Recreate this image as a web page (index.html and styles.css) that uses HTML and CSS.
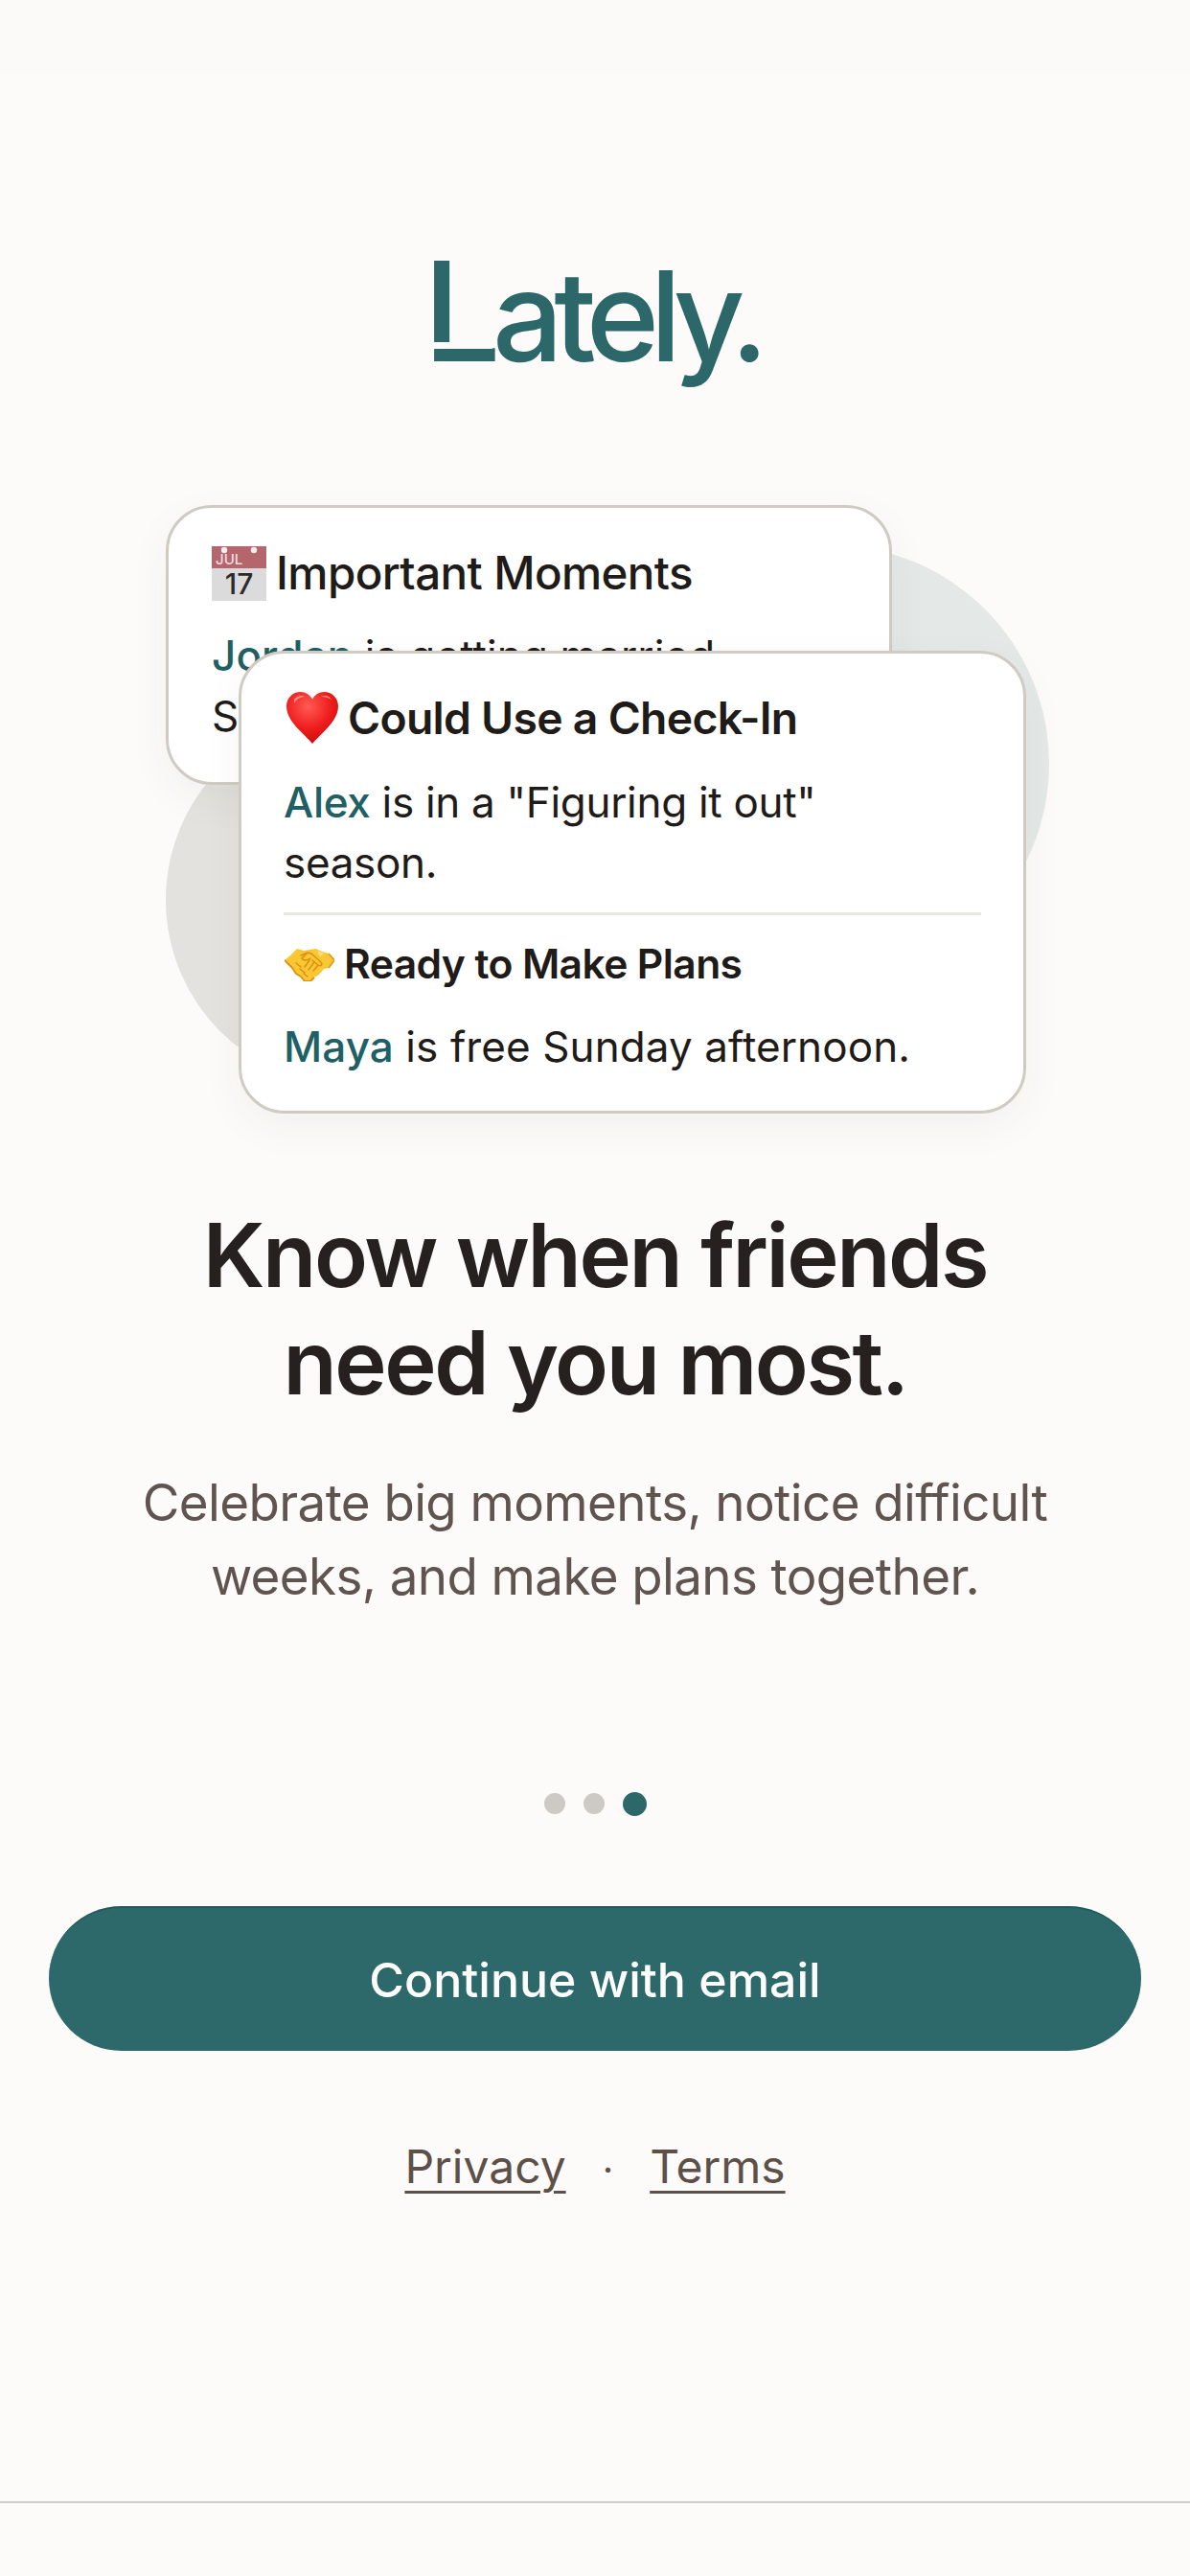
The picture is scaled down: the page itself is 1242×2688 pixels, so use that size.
FILE: index.html
```html
<!DOCTYPE html>
<html lang="en">
<head>
<meta charset="utf-8">
<title>Lately</title>
<link rel="stylesheet" href="styles.css">
</head>
<body>
<main class="screen">
  <div class="status-band"></div>
  <div class="logo"><span class="logo-l">L</span>ately.</div>
  <section class="art">
    <div class="blob blob-right"></div>
    <div class="blob blob-left"></div>
    <article class="card card-back">
      <div class="card-head">
        <svg class="emoji-cal" viewBox="0 0 57 57" aria-hidden="true">
          <rect width="57" height="57" fill="#dcdbdb"/>
          <rect width="57" height="23" fill="#b5666c"/>
          <circle cx="13" cy="4" r="3.2" fill="#f6eeee"/>
          <circle cx="44" cy="4" r="3.2" fill="#f6eeee"/>
          <text class="cal-month" x="4" y="19">JUL</text>
          <text class="cal-day" x="28.5" y="50">17</text>
        </svg>
        <h2 class="head-back">Important Moments</h2>
      </div>
      <p class="line line-wide"><b class="name">Jordan</b> is getting married Saturday.</p>
    </article>
    <article class="card card-front">
      <div class="card-head head-row-a">
        <svg class="emoji-heart" viewBox="0 0 54 54" aria-hidden="true">
          <defs>
            <radialGradient id="hg" cx="0.42" cy="0.28" r="0.8">
              <stop offset="0" stop-color="#ff5c54"/>
              <stop offset="0.55" stop-color="#ee1c1c"/>
              <stop offset="1" stop-color="#c40808"/>
            </radialGradient>
          </defs>
          <path d="M27 54 C19 44 0 31 0 15 C0 6 7 0 14.500 0 C20 0 24.500 3 27 7.500 C29.500 3 34 0 39.500 0 C47 0 54 6 54 15 C54 31 35 44 27 54 Z" fill="url(#hg)"/>
          <path d="M8 8 C11 4 16 3 19 5 C14 5 10 8 8 12 Z" fill="#ffb3ad" opacity=".75"/>
          <path d="M36 5 C40 3 45 4 47 8 C44 6 40 5 36 5 Z" fill="#ffb3ad" opacity=".7"/>
        </svg>
        <h2 class="head-front">Could Use a Check-In</h2>
      </div>
      <p class="line"><b class="name">Alex</b> is in a "Figuring it out" season.</p>
      <hr class="rule">
      <div class="card-head head-row-b">
        <svg class="emoji-shake" viewBox="0 0 52 35" aria-hidden="true">
          <path d="M0 13 L6 8 L13 1 L20 3 L26 2 L33 1 L39 4 L46 6 L52 13 L46 21 L41 22 L36 28 L31 31 L27 35 L21 35 L17 30 L12 27 L8 21 Z" fill="#f9c733"/>
          <path d="M0 13 L8 21 L12 27 L17 30 L21 35 L27 35 L31 31" fill="none" stroke="#dc8f14" stroke-width="1.800" stroke-linejoin="round"/>
          <path d="M46 6 L52 13 L46 21" fill="none" stroke="#e59d1e" stroke-width="1.800" stroke-linejoin="round"/>
          <path d="M17 8 L24 5 L28 6 L38 15 C40 17 38 20 35 18 L29 13 M24 5 L18 11 C20 14 24 13 27 11 M35 18 L30 24 M31 15 L25 23 M26 13 L21 20 M12 16 L17 20 M16 22 L21 26 M20 27 L24 30" fill="none" stroke="#dc8f14" stroke-width="1.500" stroke-linecap="round" stroke-linejoin="round"/>
          <path d="M34 3 L41 6 L37 9 Z" fill="#fde07a"/>
        </svg>
        <h3 class="head-small">Ready to Make Plans</h3>
      </div>
      <p class="line line-wide"><b class="name">Maya</b> is free Sunday afternoon.</p>
    </article>
  </section>
  <h1 class="title">Know when friends<br>need you most.</h1>
  <p class="sub">Celebrate big moments, notice difficult<br>weeks, and make plans together.</p>
  <div class="dots">
    <span class="dot"></span>
    <span class="dot"></span>
    <span class="dot dot-on"></span>
  </div>
  <button class="cta">Continue with email</button>
  <nav class="legal">
    <a class="legal-link">Privacy</a>
    <span class="legal-sep">·</span>
    <a class="legal-link">Terms</a>
  </nav>
  <div class="home-band"></div>
</main>
</body>
</html>
```
FILE: styles.css
```css
* { box-sizing: border-box; }
html, body { margin: 0; padding: 0; }
body { background: #fcfbf9; font-family: Inter, "Liberation Sans", sans-serif; color: #1f1b18; }
.screen { width: 1242px; height: 2688px; display: flex; flex-direction: column; align-items: center; overflow: hidden; background: #fcfbf9; }
.status-band { width: 100%; height: 76px; background: #fbfaf8; flex: none; }

.logo { margin-top: 174px; margin-right: 8px; height: 150px; line-height: 150px; font-size: 130px; font-weight: 550; letter-spacing: -9.5px; color: #2c686a; flex: none; }
.logo-l { position: relative; display: inline-block; font-size: 144px; letter-spacing: -9px; }
.logo-l::after { content: ""; position: absolute; left: 0; right: 0; bottom: 36px; height: 7px; background: #fcfbf9; }

.art { position: relative; width: 100%; height: 680px; margin-top: 110px; flex: none; }
.blob { position: absolute; border-radius: 50%; }
.blob-right { left: 639px; top: 59px; width: 456px; height: 456px; background: #e4e9e8; }
.blob-left { left: 173px; top: 235px; width: 388px; height: 388px; background: #e3e2de; }

.card { position: absolute; background: #fff; border: 3px solid #cfcbc2; border-radius: 48px; box-shadow: 0 14px 44px rgba(60, 50, 40, 0.05); }
.card-back { left: 173px; top: 17px; width: 758px; height: 292px; padding: 37px 45px; }
.card-front { left: 249px; top: 169px; width: 822px; height: 483px; padding: 36px 44px; }
.card-head { display: flex; align-items: center; gap: 10px; }
.card-head h2, .card-head h3 { margin: 0; }
.emoji-cal { width: 57px; height: 57px; flex: none; }
.emoji-heart { width: 54px; height: 54px; flex: none; margin-left: 3px; }
.emoji-shake { width: 52px; height: 35px; flex: none; margin-left: 1px; }
.cal-month { font: 500 15px Inter, sans-serif; fill: #f3dfe0; }
.cal-day { font: 500 30px Inter, sans-serif; fill: #2b2b2b; text-anchor: middle; }
.head-back { font-size: 47.5px; font-weight: 500; line-height: 62px; letter-spacing: -0.6px; }
.head-front { font-size: 46.3px; font-weight: 580; line-height: 62px; letter-spacing: -0.7px; }
.head-small { font-size: 42.6px; font-weight: 580; line-height: 62px; letter-spacing: -0.6px; margin-left: 4px; }
.line { margin: 26px 0 0; font-size: 44px; line-height: 63px; font-weight: 400; letter-spacing: -0.3px; }
.line-wide { letter-spacing: 0.1px; }
.card-back .line { margin-top: 24px; }
.name { color: #1f6064; font-weight: 500; }
.card-back .line { width: 630px; }
.card-front .line { width: 640px; }
.card-front .line:last-child { width: auto; margin-top: 24px; }
.rule { border: 0; height: 3px; background: #e9e7e2; margin: 20px 0 20px; }

.title { margin: 64px 0 0; font-size: 92px; line-height: 112px; font-weight: 630; letter-spacing: -2.4px; text-align: center; color: #26211e; }
.sub { margin: 52px 0 0; font-size: 52.9px; line-height: 77px; font-weight: 375; letter-spacing: -0.6px; text-align: center; color: #5f5450; }

.dots { display: flex; align-items: center; gap: 19px; height: 26px; margin-top: 185px; flex: none; }
.dot { width: 22px; height: 22px; border-radius: 50%; background: #cdcac3; }
.dot-on { width: 25px; height: 25px; background: #2c686a; }

.cta { width: 1140px; height: 151px; margin-top: 94px; border: 0; border-top: 2px solid #1d5a5c; border-radius: 76px; background: #2d696b; color: #fdfdfb; font: 500 50px Inter, sans-serif; flex: none; }

.legal { display: flex; align-items: baseline; gap: 38px; margin-top: 89px; font-size: 48px; line-height: 64px; color: #5c5049; }
.legal-link { text-decoration: underline; text-decoration-thickness: 3px; text-underline-offset: 8px; }
.legal-sep { font-size: 40px; }

.home-band { width: 100%; margin-top: auto; height: 78px; flex: none; border-top: 2px solid #cdcdcb; }
```
